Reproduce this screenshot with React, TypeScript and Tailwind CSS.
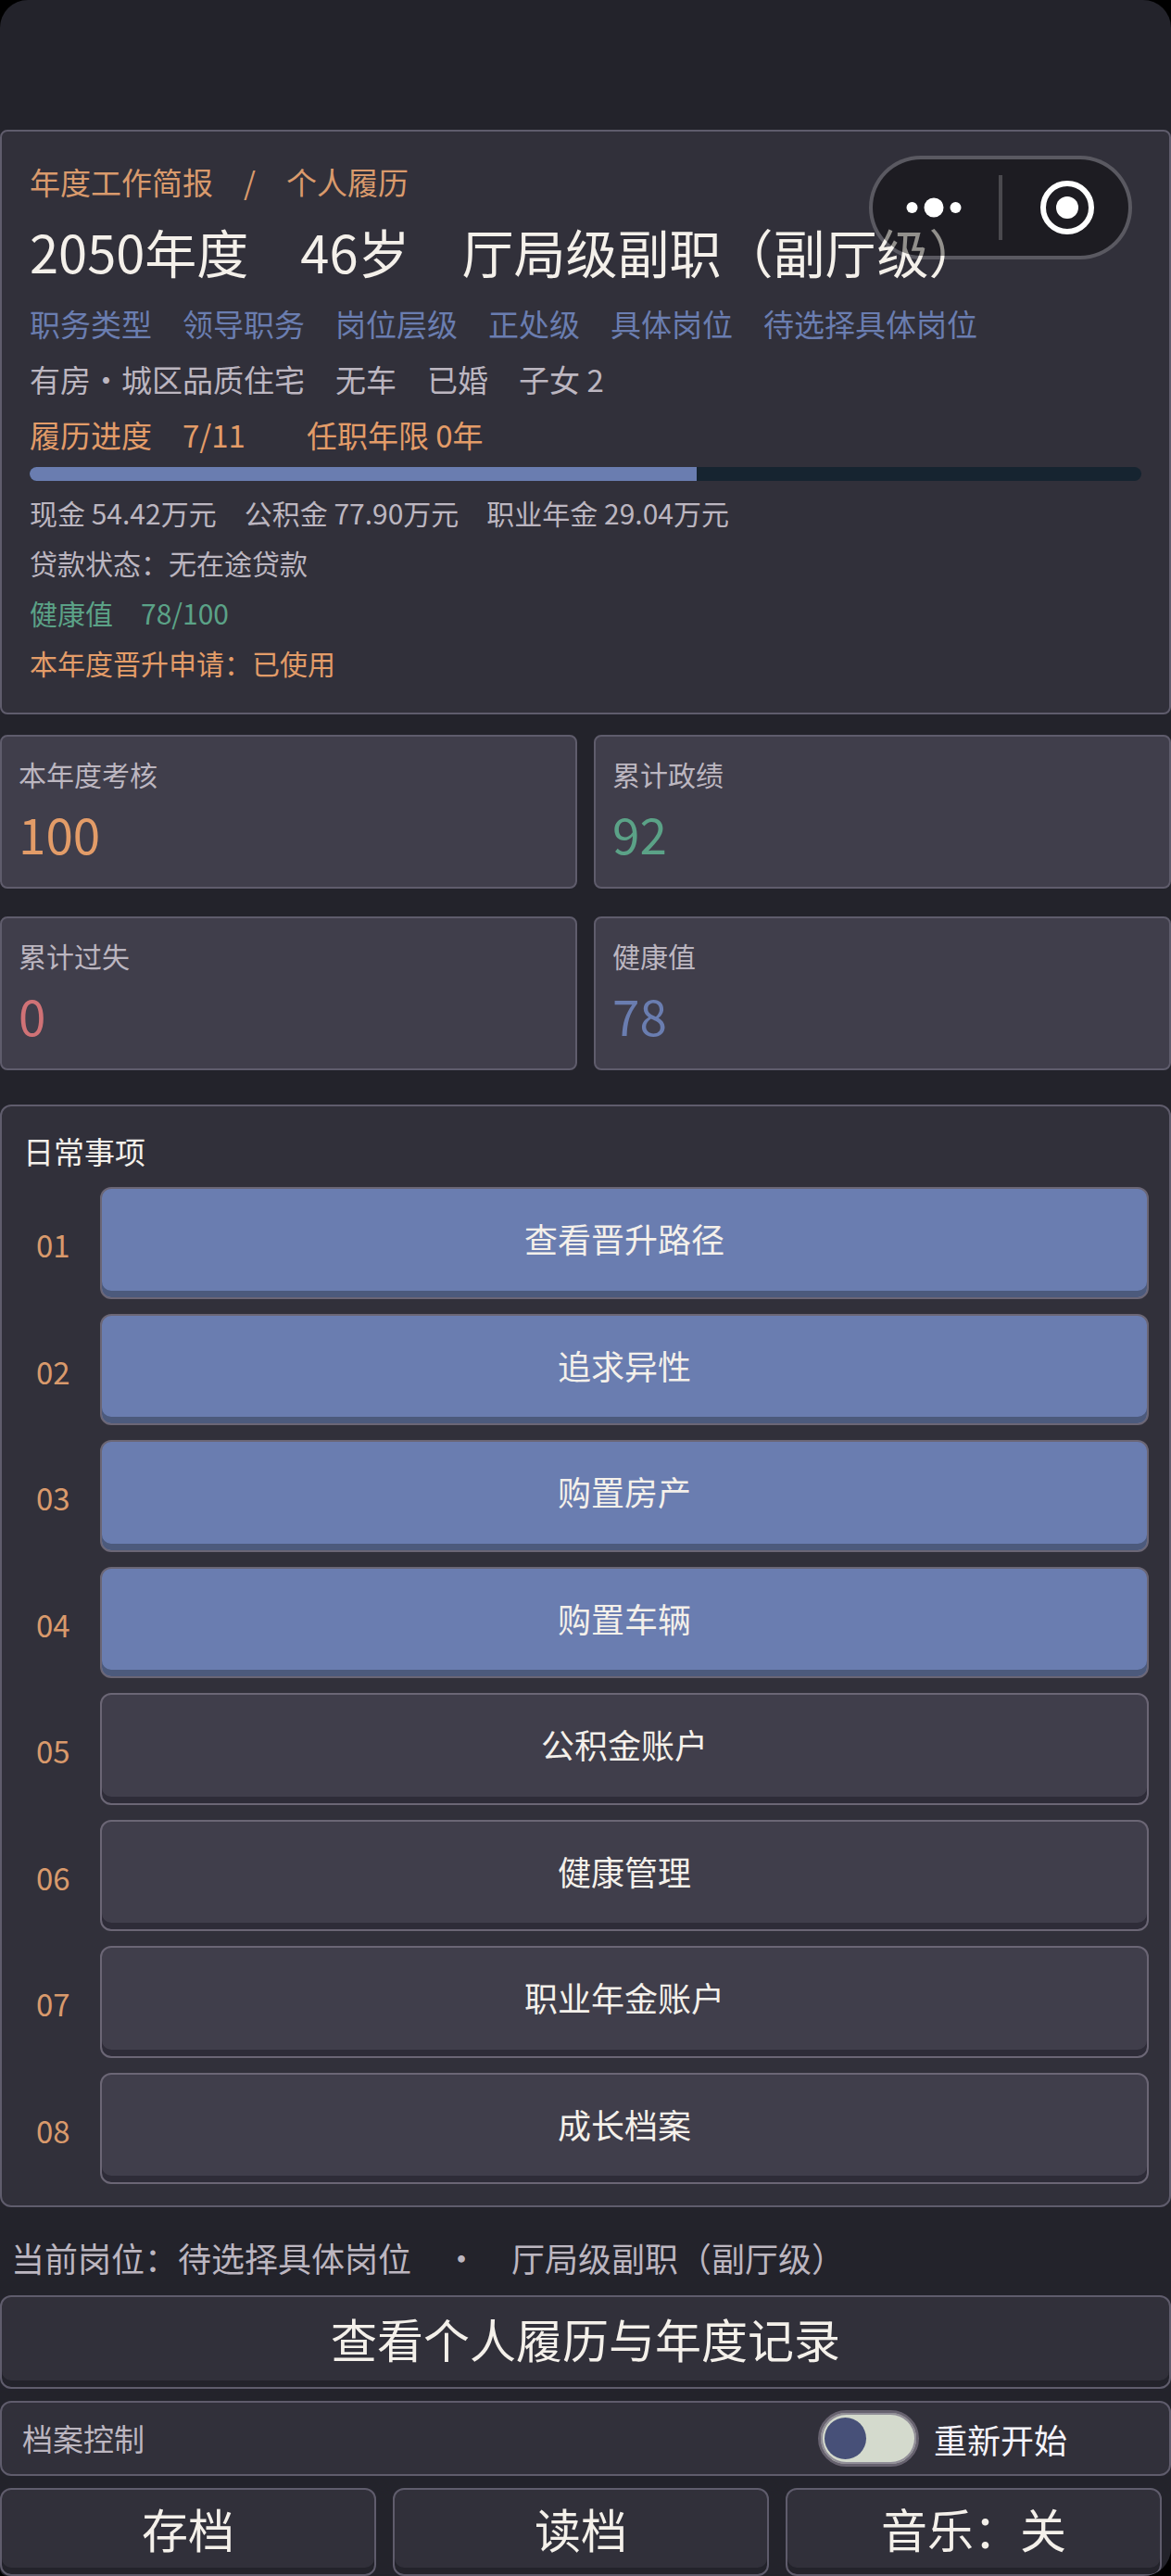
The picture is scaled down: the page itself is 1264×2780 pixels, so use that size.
import { useState } from "react";

const summary = [
  { label: "本年度考核", value: "100", tone: "text-[#e39c68]" },
  { label: "累计政绩", value: "92", tone: "text-[#5ba287]" },
  { label: "累计过失", value: "0", tone: "text-[#d07276]" },
  { label: "健康值", value: "78", tone: "text-[#6a7db0]" },
];

const tasks = [
  { name: "查看晋升路径", active: true },
  { name: "追求异性", active: true },
  { name: "购置房产", active: true },
  { name: "购置车辆", active: true },
  { name: "公积金账户", active: false },
  { name: "健康管理", active: false },
  { name: "职业年金账户", active: false },
  { name: "成长档案", active: false },
];

function Capsule() {
  return (
    <div className="absolute top-[168px] right-[42px] flex h-28 w-71 items-center rounded-full border-4 border-white/20 bg-black/40 bg-clip-padding">
      <button aria-label="更多" className="flex flex-1 justify-center pr-1">
        <svg viewBox="0 0 60 24" className="h-6 w-15 fill-white">
          <circle cx="6.5" cy="12" r="6" />
          <circle cx="30" cy="12" r="10.5" />
          <circle cx="53.5" cy="12" r="6" />
        </svg>
      </button>
      <span className="h-[70px] w-1 bg-white/20" />
      <button aria-label="关闭" className="flex flex-1 justify-center pl-1">
        <svg viewBox="0 0 60 60" className="size-15">
          <circle cx="30" cy="30" r="26" fill="none" stroke="#fff" strokeWidth="6" />
          <circle cx="30" cy="30" r="12" fill="#fff" />
        </svg>
      </button>
    </div>
  );
}

function Profile() {
  return (
    <section className="rounded-lg border-2 border-[#5f5c6c] bg-[#31303a] px-[30px] pt-[31px] pb-[27px] text-[30px] leading-[54px] whitespace-pre text-[#bcb6c0]">
      <p className="text-[33px] leading-[46px] text-[#d99a6c]">年度工作简报　/　个人履历</p>
      <h1 className="mt-2 mb-1 text-[56px] leading-[88px] text-[#f4f0ea]">
        2050年度　46岁　厅局级副职（副厅级）
      </h1>
      <div className="text-[33px] leading-[60px]">
        <p className="text-[#6a7db0]">职务类型　领导职务　岗位层级　正处级　具体岗位　待选择具体岗位</p>
        <p>有房・城区品质住宅　无车　已婚　子女 2</p>
        <p className="text-[#e39c68]">履历进度　7/11　　任职年限 0年</p>
      </div>
      <div
        role="progressbar"
        aria-label="履历进度"
        aria-valuenow={60}
        className="mt-[5px] mb-[7px] h-[15px] overflow-hidden rounded-lg bg-[#162430]"
      >
        <div className="h-full w-3/5 bg-[#6a7db0]" />
      </div>
      <p>现金 54.42万元　公积金 77.90万元　职业年金 29.04万元</p>
      <p>贷款状态：无在途贷款</p>
      <p className="text-[#5ba287]">健康值　78/100</p>
      <p className="text-[#e39c68]">本年度晋升申请：已使用</p>
    </section>
  );
}

function Summary() {
  return (
    <dl className="mt-[22px] grid grid-cols-2 gap-x-[18px] gap-y-[30px]">
      {summary.map((s) => (
        <div
          key={s.label}
          className="h-[166px] rounded-lg border-2 border-[#5f5c6c] bg-[#403e4b] px-[18px] pt-[18px]"
        >
          <dt className="text-[30px] leading-[44px] text-[#bcb6c0]">{s.label}</dt>
          <dd className={"mt-1 text-[53px] leading-[76px] " + s.tone}>{s.value}</dd>
        </div>
      ))}
    </dl>
  );
}

function Tasks() {
  return (
    <section className="mt-[37px] rounded-xl border-2 border-[#5f5c6c] bg-[#31303a] px-[22px] pt-[25px] pb-[23px]">
      <h2 className="px-px text-[33px] leading-[46px] text-[#f4f0ea]">日常事项</h2>
      <ol className="mt-4 grid h-[1076px] grid-rows-8 gap-4">
        {tasks.map((t, i) => (
          <li key={t.name} className="flex items-center">
            <span className="w-[84px] pt-1 pl-[15px] text-[33px] leading-[46px] text-[#d99a6c]">
              {"0" + (i + 1)}
            </span>
            <button
              className={
                "h-full flex-1 rounded-xl border-2 border-[#6b6675] pb-2.5 text-[36px] leading-[52px] text-[#f4f0ea] " +
                (t.active
                  ? "bg-[#6a7db0] shadow-[inset_0_-7px_0_#4c5a7c]"
                  : "bg-[#403e4b] shadow-[inset_0_-7px_0_#2e2c38]")
              }
            >
              {t.name}
            </button>
          </li>
        ))}
      </ol>
    </section>
  );
}

const footButton =
  "rounded-xl border-2 border-[#5f5c6c] bg-[#31303a] pb-2.5 text-[50px] leading-[72px] text-[#f4f0ea] shadow-[inset_0_-7px_0_#23232b]";

export default function App() {
  const [restart, setRestart] = useState(false);
  return (
    <div className="min-h-screen bg-black font-['Noto_Sans_CJK_SC',sans-serif]">
      <main className="relative overflow-hidden rounded-t-[30px] rounded-br-[30px] rounded-bl-lg bg-[#23232b] pt-[140px]">
        <Profile />
        <Summary />
        <Tasks />
        <p className="mt-[27px] px-3 text-[36px] leading-[54px] whitespace-pre text-[#bcb6c0]">
          当前岗位：待选择具体岗位　・　厅局级副职（副厅级）
        </p>
        <button className={footButton + " mt-3.5 block h-[101px] w-full"}>查看个人履历与年度记录</button>
        <section className="mt-[13px] flex h-[81px] items-center rounded-xl border-2 border-[#5f5c6c] bg-[#31303a] pr-[110px] pl-[22px]">
          <h2 className="flex-1 text-[33px] text-[#bcb6c0]">档案控制</h2>
          <label className="flex items-center gap-4 text-[36px] text-[#f6f4fc]">
            <input
              type="checkbox"
              role="switch"
              checked={restart}
              onChange={(e) => setRestart(e.target.checked)}
              className="flex h-[61px] w-[109px] appearance-none items-center rounded-full border-[3px] border-[#67626f] bg-[#d4dacd] px-1 shadow-[inset_0_0_0_2px_#918e98] before:size-[45px] before:rounded-full before:bg-[#475078] checked:justify-end"
            />
            重新开始
          </label>
        </section>
        <div className="mt-[13px] grid grid-cols-3 gap-[18px] pr-2.5">
          <button className={footButton + " h-[95px]"}>存档</button>
          <button className={footButton + " h-[95px]"}>读档</button>
          <button className={footButton + " h-[95px]"}>音乐：关</button>
        </div>
        <Capsule />
      </main>
    </div>
  );
}
